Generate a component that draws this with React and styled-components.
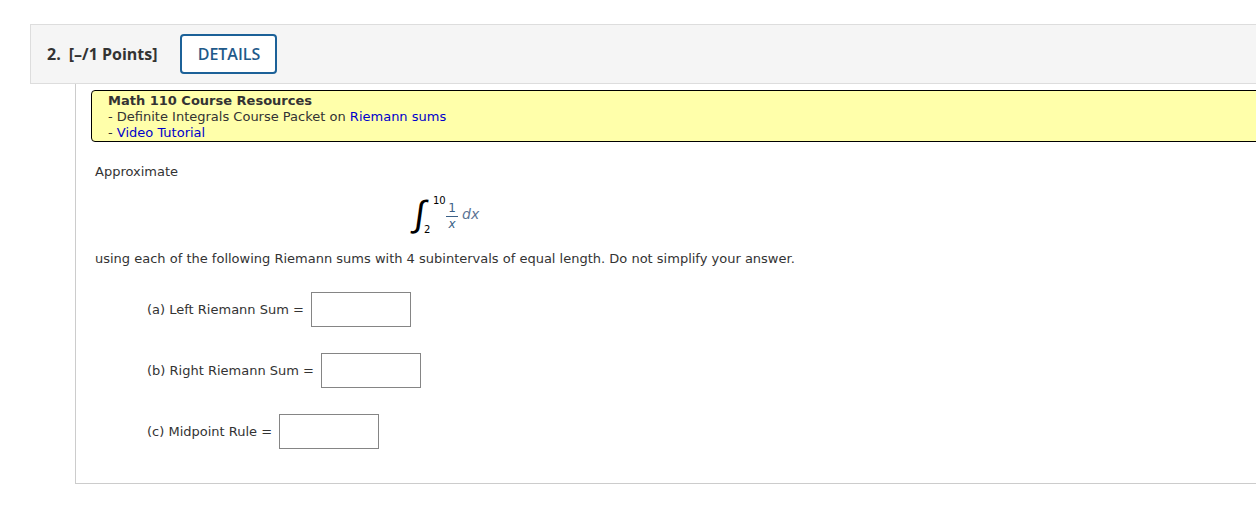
import React from "react";
import styled, { createGlobalStyle } from "styled-components";

const GlobalStyle = createGlobalStyle`
  body {
    margin: 0;
    background: #ffffff;
    overflow: hidden;
  }
`;

const Page = styled.div`
  padding: 24px 0 0 30px;
  width: 1256px;
  box-sizing: border-box;
  overflow: hidden;
`;

const Header = styled.div`
  width: 1260px;
  height: 60px;
  box-sizing: border-box;
  background: #f5f5f5;
  border: 1px solid #dddddd;
  display: flex;
  align-items: center;
  padding-left: 16px;
  font-family: "Open Sans", sans-serif;
`;

const Number = styled.span`
  font-weight: 700;
  font-size: 16px;
  color: #333333;
  margin-right: 8px;
`;

const Points = styled.span`
  font-weight: 700;
  font-size: 16px;
  color: #333333;
  margin-right: 23px;
`;

const DetailsButton = styled.button`
  height: 40px;
  width: 97px;
  border: 2px solid #1c6198;
  border-radius: 4px;
  background: #ffffff;
  color: #1f5a8a;
  font-family: "Open Sans", sans-serif;
  font-size: 16px;
  font-weight: 600;
  cursor: pointer;
`;

const Body = styled.div`
  margin-left: 45px;
  width: 1240px;
  height: 400px;
  box-sizing: border-box;
  border-left: 1px solid #cccccc;
  border-bottom: 1px solid #cccccc;
  padding: 6px 0 0 15px;
  font-family: "DejaVu Sans", Verdana, sans-serif;
  font-size: 13px;
  color: #333333;
`;

const Resources = styled.div`
  background: #ffffaa;
  border: 1px solid #000000;
  border-radius: 4px;
  height: 52px;
  box-sizing: border-box;
  padding: 2px 0 0 16px;
  line-height: 16px;
  font-size: 13px;
  color: #333333;
`;

const ResTitle = styled.div`
  font-weight: 700;
`;

const ResLink = styled.a`
  color: #0000cc;
  text-decoration: none;
`;

const Para = styled.p`
  margin: ${(p) => p.$m || "0"};
  padding-left: 4px;
  line-height: 16px;
`;

const MathRow = styled.div`
  display: flex;
  margin: 16px 0 0 0;
  height: 50px;
  padding-left: 324px;
  color: #000000;
`;

const Integral = styled.div`
  position: relative;
  width: 31px;
  height: 44px;
`;

const IntSign = styled.span`
  font-family: "Liberation Sans", sans-serif;
  font-size: 36px;
  line-height: 36px;
  font-weight: 300;
  display: inline-block;
  transform: skewX(-8deg);
`;

const Limit = styled.span`
  position: absolute;
  font-size: 10px;
  line-height: 10px;
  left: ${(p) => p.$left}px;
  top: ${(p) => p.$top}px;
`;

const Fraction = styled.div`
  display: inline-flex;
  flex-direction: column;
  align-items: center;
  margin: 7px 4px 0 0;
  color: #3b5f86;
  font-size: 12px;
  line-height: 11px;
`;

const FracBar = styled.span`
  width: 12px;
  border-top: 1px solid #3b5f86;
  margin: 2px 0 2px;
`;

const Dx = styled.span`
  font-style: italic;
  color: #5a7394;
  font-size: 14px;
  margin-top: 10px;
`;

const AnswerRow = styled.div`
  display: flex;
  align-items: center;
  padding-left: 56px;
  margin-top: ${(p) => p.$mt}px;
`;

const Label = styled.span`
  margin-right: 7px;
`;

const AnswerInput = styled.input`
  width: 100px;
  height: 35px;
  box-sizing: border-box;
  border: 1px solid #858585;
  background: #ffffff;
`;

export default function App() {
  return (
    <>
      <GlobalStyle />
      <Page>
        <Header>
          <Number>2.</Number>
          <Points>[–/1 Points]</Points>
          <DetailsButton>DETAILS</DetailsButton>
        </Header>
        <Body>
          <Resources>
            <ResTitle>Math 110 Course Resources</ResTitle>
            <div>
              - Definite Integrals Course Packet on <ResLink href="#">Riemann sums</ResLink>
            </div>
            <div>
              - <ResLink href="#">Video Tutorial</ResLink>
            </div>
          </Resources>
          <Para $m="22px 0 0 0">Approximate</Para>
          <MathRow>
            <Integral>
              <IntSign>∫</IntSign>
              <Limit $left={18} $top={0}>10</Limit>
              <Limit $left={9} $top={29}>2</Limit>
            </Integral>
            <Fraction>
              <span>1</span>
              <FracBar />
              <i>x</i>
            </Fraction>
            <Dx>dx</Dx>
          </MathRow>
          <Para $m="5px 0 0 0">
            using each of the following Riemann sums with 4 subintervals of equal length. Do not simplify your answer.
          </Para>
          <AnswerRow $mt={25}>
            <Label>(a) Left Riemann Sum =</Label>
            <AnswerInput />
          </AnswerRow>
          <AnswerRow $mt={26}>
            <Label>(b) Right Riemann Sum =</Label>
            <AnswerInput />
          </AnswerRow>
          <AnswerRow $mt={26}>
            <Label>(c) Midpoint Rule =</Label>
            <AnswerInput />
          </AnswerRow>
        </Body>
      </Page>
    </>
  );
}
